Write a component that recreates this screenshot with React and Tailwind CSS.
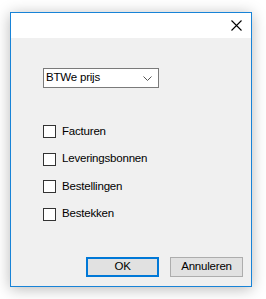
import { useState } from "react";

const options = ["Facturen", "Leveringsbonnen", "Bestellingen", "Bestekken"];

function Check({ label, checked, onChange }) {
  return (
    <label className="flex h-[13px] items-center gap-[6px]">
      <span
        className="flex h-[13px] w-[13px] items-center justify-center border border-[#333333] bg-white"
        onClick={onChange}
      >
        {checked && (
          <svg width="9" height="9" viewBox="0 0 9 9">
            <path d="M1 4.5 L3.5 7 L8 1.5" fill="none" stroke="#000" strokeWidth="1.3" />
          </svg>
        )}
      </span>
      <span className="text-[11.5px] leading-none tracking-[-0.2px] text-black">{label}</span>
    </label>
  );
}

export default function App() {
  const [checked, setChecked] = useState({});

  return (
    <div
      className="h-[299px] w-[266px] bg-white pl-[10px] pt-[12px]"
      style={{ fontFamily: '"Liberation Sans", Arial, sans-serif' }}
    >
      <div className="flex h-[275px] w-[242px] flex-col border border-[#1883d7] bg-[#f0f0f0] shadow-[0_2px_14px_rgba(0,0,0,0.28)]">
        {/* title bar */}
        <div className="flex h-[25px] items-center justify-end bg-white pr-[9px]">
          <svg width="11" height="11" viewBox="0 0 11 11">
            <path d="M0.5 0.5 L10.5 10.5 M10.5 0.5 L0.5 10.5" stroke="#000" strokeWidth="1.1" />
          </svg>
        </div>

        <div className="flex flex-1 flex-col pl-[32px] pt-[30px]">
          <div className="flex h-[20px] w-[116px] items-center justify-between border border-[#7a7a7a] bg-white pl-[2px] pr-[6px]">
            <span className="text-[11.5px] leading-none tracking-[-0.2px] text-black">BTWe prijs</span>
            <svg width="9" height="5" viewBox="0 0 9 5">
              <path d="M0.5 0.5 L4.5 4.5 L8.5 0.5" fill="none" stroke="#555" strokeWidth="1" />
            </svg>
          </div>

          <div className="mt-[37px] flex flex-col gap-[14.5px]">
            {options.map((o) => (
              <Check
                key={o}
                label={o}
                checked={!!checked[o]}
                onChange={() => setChecked({ ...checked, [o]: !checked[o] })}
              />
            ))}
          </div>

          <div className="mt-auto flex justify-end gap-[11px] pb-[9px] pr-[8px]">
            <button className="h-[20px] w-[73px] border-2 border-[#0078d7] bg-[#e1e1e1] text-[11.5px] leading-none tracking-[-0.2px] text-black">
              OK
            </button>
            <button className="h-[20px] w-[73px] border border-[#adadad] bg-[#e1e1e1] text-[11.5px] leading-none tracking-[-0.2px] text-black">
              Annuleren
            </button>
          </div>
        </div>
      </div>
    </div>
  );
}
